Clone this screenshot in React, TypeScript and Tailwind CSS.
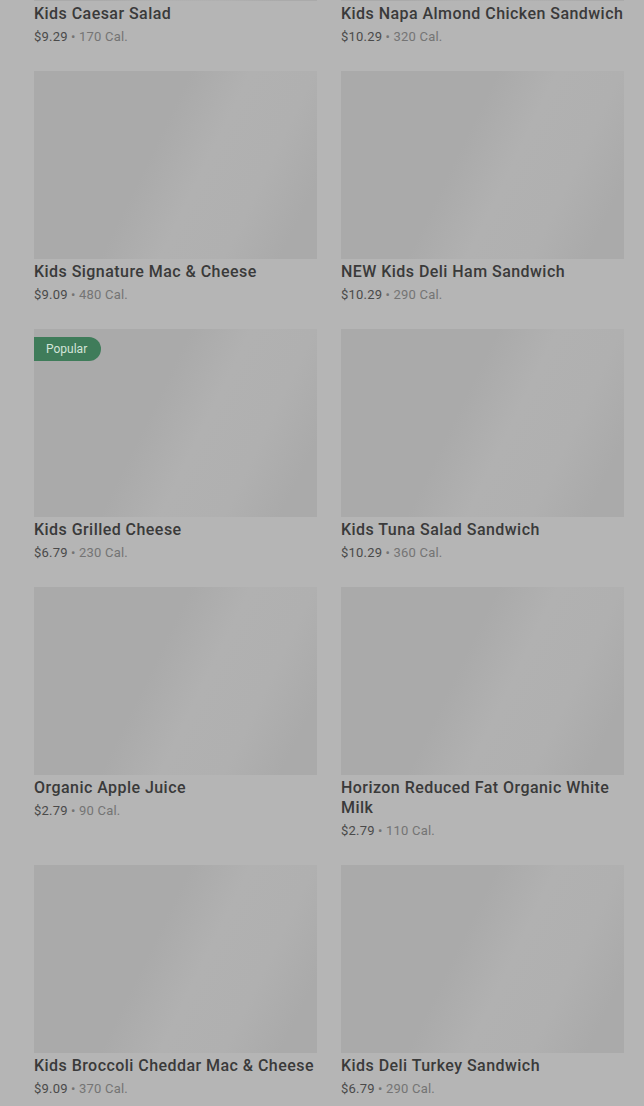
const items = [
  { name: 'Kids Caesar Salad', price: '$9.29', cal: '170 Cal.' },
  { name: 'Kids Napa Almond Chicken Sandwich', price: '$10.29', cal: '320 Cal.' },
  { name: 'Kids Signature Mac & Cheese', price: '$9.09', cal: '480 Cal.' },
  { name: 'NEW Kids Deli Ham Sandwich', price: '$10.29', cal: '290 Cal.' },
  { name: 'Kids Grilled Cheese', price: '$6.79', cal: '230 Cal.', popular: true },
  { name: 'Kids Tuna Salad Sandwich', price: '$10.29', cal: '360 Cal.' },
  { name: 'Organic Apple Juice', price: '$2.79', cal: '90 Cal.' },
  { name: 'Horizon Reduced Fat Organic White Milk', price: '$2.79', cal: '110 Cal.' },
  { name: 'Kids Broccoli Cheddar Mac & Cheese', price: '$9.09', cal: '370 Cal.' },
  { name: 'Kids Deli Turkey Sandwich', price: '$6.79', cal: '290 Cal.' },
];

function ItemCard({ item }: { item: (typeof items)[number] }) {
  return (
    <div className="flex flex-col">
      <div className="relative h-[188px] bg-[linear-gradient(116deg,#aaaaaa_42%,#b1b1b1_58%,#b0b0b0_75%,#aaaaaa_90%)]">
        {item.popular && (
          <span className="absolute left-0 top-2 flex h-6 items-center rounded-r-full bg-[#3f7c5a] pl-3 pr-3.5 text-xs text-[#d3e4d9]">
            Popular
          </span>
        )}
      </div>
      <h3 className="mt-[3px] text-base leading-5 font-medium tracking-[0.45px] text-[#3a3a3a]">{item.name}</h3>
      <p className="mt-[3px] text-[13px] leading-5 tracking-[0.2px]">
        <span className="text-[#4a4a4a]">{item.price}</span>
        <span className="text-[#747474]"> • {item.cal}</span>
      </p>
    </div>
  );
}

export default function App() {
  return (
    <div className="h-[1106px] overflow-hidden bg-[#b5b5b5] font-['Roboto',sans-serif]">
      <div className="mt-[-187px] grid grid-cols-[283px_283px] gap-x-6 gap-y-6 pl-[34px]">
        {items.map((item) => (
          <ItemCard key={item.name} item={item} />
        ))}
      </div>
    </div>
  );
}
